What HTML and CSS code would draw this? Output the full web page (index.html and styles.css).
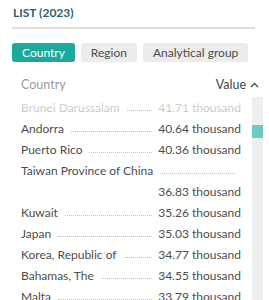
FILE: index.html
```html
<!DOCTYPE html>
<html>
<head>
  <title>List (2023)</title>
  <link rel="stylesheet" href="styles.css">
</head>
<body>
  <div class="panel">
    <h2 class="title">LIST (2023)</h2>
    <div class="tabs">
      <button class="tab active">Country</button>
      <button class="tab">Region</button>
      <button class="tab">Analytical group</button>
    </div>
    <div class="list-head">
      <span class="col-name">Country</span>
      <span class="col-value">Value
        <svg width="9" height="6" viewBox="0 0 9 6"><path d="M1 5 L4.5 1.5 L8 5" fill="none" stroke="#444" stroke-width="1.3"/></svg>
      </span>
    </div>
    <div class="list-wrap">
      <div class="list">
        <div class="row"><span class="name">Brunei Darussalam</span><span class="dots"></span><span class="value">41.71 thousand</span></div>
        <div class="row"><span class="name">Andorra</span><span class="dots"></span><span class="value">40.64 thousand</span></div>
        <div class="row"><span class="name">Puerto Rico</span><span class="dots"></span><span class="value">40.36 thousand</span></div>
        <div class="row"><span class="name">Taiwan Province of China</span><span class="dots"></span><span class="value">36.83 thousand</span></div>
        <div class="row"><span class="name">Kuwait</span><span class="dots"></span><span class="value">35.26 thousand</span></div>
        <div class="row"><span class="name">Japan</span><span class="dots"></span><span class="value">35.03 thousand</span></div>
        <div class="row"><span class="name">Korea, Republic of</span><span class="dots"></span><span class="value">34.77 thousand</span></div>
        <div class="row"><span class="name">Bahamas, The</span><span class="dots"></span><span class="value">34.55 thousand</span></div>
        <div class="row"><span class="name">Malta</span><span class="dots"></span><span class="value">33.79 thousand</span></div>
      </div>
      <div class="track"><div class="thumb"></div></div>
    </div>
  </div>
</body>
</html>
```
FILE: styles.css
```css
body {
    margin: 0;
    padding: 0;
    background: #ffffff;
    font-family: Lato, "Noto Sans", sans-serif;
    color: #4d4d4d;
    overflow: hidden;
}
.panel {
    padding: 5px 17px 0 12px;
}
.title {
    margin: 0 -3px 0 0;
    padding: 0 0 6px 1px;
    font-size: 12px;
    font-weight: bold;
    color: #2d5c7c;
    line-height: 16px;
    border-bottom: 2px solid #dedede;
}
.tabs {
    display: flex;
    gap: 6px;
    margin-top: 14px;
}
.tab {
    font-family: inherit;
    font-size: 12px;
    height: 19px;
    padding: 0 10px;
    border: none;
    border-radius: 3px;
    background: #ececec;
    color: #4d4d4d;
    line-height: 19px;
    white-space: nowrap;
}
.tab.active {
    background: #1ba99c;
    color: #ffffff;
}
.list-head {
    display: flex;
    justify-content: space-between;
    align-items: center;
    margin: 15px -7px 0 0;
    padding-left: 9px;
    font-size: 12.5px;
    line-height: 16px;
}
.col-name {
    color: #9a9a9a;
}
.col-value {
    color: #444;
    display: flex;
    align-items: center;
    gap: 4px;
}
.list-wrap {
    position: relative;
    display: flex;
    margin-top: 4px;
}
.list-wrap:before {
    content: "";
    position: absolute;
    left: 0;
    right: 0;
    top: 0;
    height: 20px;
    background: linear-gradient(rgba(255,255,255,0.85), rgba(255,255,255,0.6));
}
.list {
    flex: 1;
    padding: 0 11px 0 9px;
}
.row {
    display: flex;
    flex-wrap: wrap;
    align-items: baseline;
    font-size: 12px;
    line-height: 21px;
    white-space: nowrap;
}
.dots {
    flex: 1;
    min-width: 24px;
    margin: 0 6px 0 7px;
    border-bottom: 1px dotted #c2c2c2;
    height: 0;
    align-self: center;
    transform: translateY(3px);
}
.value {
    margin-left: auto;
}
.track {
    width: 11px;
    background: #efefef;
    margin-right: -11px;
}
.thumb {
    margin-top: 28px;
    height: 13px;
    background: #6ccbc3;
}
```
